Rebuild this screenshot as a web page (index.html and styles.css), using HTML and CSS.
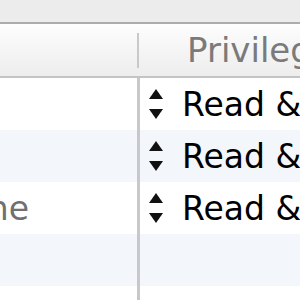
FILE: index.html
```html
<!DOCTYPE html>
<html lang="en">
<head>
    <meta charset="UTF-8">
    <title>Sharing &amp; Permissions</title>
    <link rel="stylesheet" href="styles.css">
</head>
<body>
    <div class="toolbar"></div>
    <div class="table">
        <div class="header">
            <div class="col-name">Name</div>
            <div class="sep"></div>
            <div class="col-priv">Privilege</div>
        </div>
        <div class="row">
            <div class="cell-name">me</div>
            <div class="cell-priv"><span class="stepper"><span class="up"></span><span class="down"></span></span>Read &amp; Write</div>
        </div>
        <div class="row odd">
            <div class="cell-name">staff</div>
            <div class="cell-priv"><span class="stepper"><span class="up"></span><span class="down"></span></span>Read &amp; Write</div>
        </div>
        <div class="row">
            <div class="cell-name dim">everyone</div>
            <div class="cell-priv"><span class="stepper"><span class="up"></span><span class="down"></span></span>Read &amp; Write</div>
        </div>
        <div class="row odd">
            <div class="cell-name"></div>
            <div class="cell-priv"></div>
        </div>
        <div class="row">
            <div class="cell-name"></div>
            <div class="cell-priv"></div>
        </div>
    </div>
</body>
</html>
```

FILE: styles.css
```css
body {
    margin: 0;
    width: 300px;
    height: 300px;
    overflow: hidden;
    background-color: #fff;
    font-family: 'DejaVu Sans', sans-serif;
    font-size: 33px;
}
.toolbar {
    height: 22px;
    background-color: #ececec;
    border-bottom: 2px solid #acacac;
}
.table {
    margin-left: -200px;
    width: 700px;
}
.header {
    display: flex;
    align-items: center;
    height: 52px;
    border-bottom: 2px solid #c4c4c4;
    background: linear-gradient(#fdfdfd, #ededed);
    color: #7a7a7a;
    font-size: 34px;
}
.col-name {
    width: 337px;
    visibility: hidden;
}
.sep {
    width: 2px;
    height: 35px;
    background-color: #c9c9c9;
}
.col-priv {
    padding-left: 48px;
    white-space: nowrap;
}
.row {
    display: flex;
    height: 52px;
}
.row.odd {
    background-color: #f3f6fa;
}
.cell-name {
    width: 340px;
    border-right: 3px solid #c8c8c8;
    display: flex;
    align-items: center;
    justify-content: flex-end;
    box-sizing: border-box;
    color: transparent;
}
.cell-name.dim {
    color: #707070;
    padding-right: 108px;
}
.cell-priv {
    display: flex;
    align-items: center;
    padding-left: 9px;
    white-space: nowrap;
    color: #000;
}
.stepper {
    display: flex;
    flex-direction: column;
    justify-content: space-between;
    width: 14px;
    height: 30px;
    margin-right: 19px;
}
.up, .down {
    width: 0;
    height: 0;
    border-left: 7px solid transparent;
    border-right: 7px solid transparent;
}
.up {
    border-bottom: 10px solid #111;
}
.down {
    border-top: 10px solid #111;
}
```
